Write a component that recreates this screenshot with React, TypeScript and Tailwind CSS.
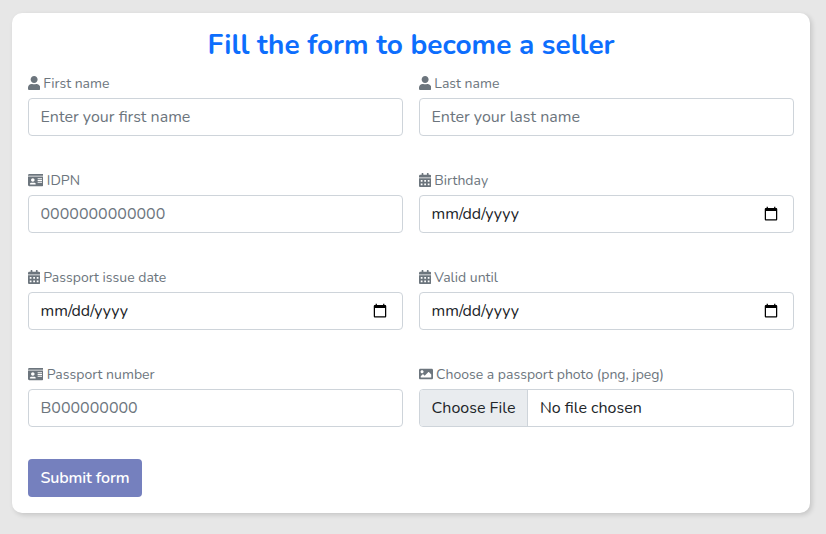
import React from "react";
import type { ReactNode } from "react";
import { FaUser, FaIdCard, FaCalendarAlt, FaImage } from "react-icons/fa";

const control =
  "block h-[38px] w-full rounded-[4px] border border-[#ced4da] bg-white pl-[11.5px] pr-3 py-1.5 text-base leading-6 text-[#212529] outline-none placeholder:text-[#6c757d]";

const dateControl =
  control +
  " [&::-webkit-datetime-edit-fields-wrapper]:p-0 [&::-webkit-datetime-edit-text]:p-0 [&::-webkit-datetime-edit-month-field]:p-0 [&::-webkit-datetime-edit-day-field]:p-0 [&::-webkit-datetime-edit-year-field]:p-0";

function Field({ icon, label, children }: { icon: ReactNode; label: string; children: ReactNode }) {
  return (
    <label className="block">
      <span className="mb-1 -ml-[0.5px] flex h-[21px] items-center gap-[3.6px] text-[14px] leading-[21px] text-[#6c757d]">
        <span className="pb-[1.5px]">{icon}</span>
        <span>{label}</span>
      </span>
      {children}
    </label>
  );
}

const user = <FaUser className="h-[14px] w-[12.25px]" />;
const idCard = <FaIdCard className="h-[14px] w-[15.75px]" />;
const calendar = <FaCalendarAlt className="h-[14px] w-[12.25px]" />;
const image = <FaImage className="h-[14px] w-[14px]" />;

export default function App() {
  return (
    <div className="h-screen bg-[#e7e7e7] pt-[13px] pr-4 pl-3 font-['Nunito','Lato',sans-serif]">
      <form
        className="h-[500px] rounded-[10px] bg-white p-4 shadow-[2px_2px_5px_rgba(0,0,0,0.15)]"
        onSubmit={(e) => e.preventDefault()}
      >
        <h3 className="h-[44px] text-center text-[28px] leading-[33px] font-bold text-[#0d6efd]">
          Fill the form to become a seller
        </h3>
        <div className="grid grid-cols-2 gap-x-4 gap-y-[34px]">
          <Field icon={user} label="First name">
            <input className={control} placeholder="Enter your first name" />
          </Field>
          <Field icon={user} label="Last name">
            <input className={control} placeholder="Enter your last name" />
          </Field>
          <Field icon={idCard} label="IDPN">
            <input className={control} placeholder="0000000000000" />
          </Field>
          <Field icon={calendar} label="Birthday">
            <input type="date" className={dateControl} />
          </Field>
          <Field icon={calendar} label="Passport issue date">
            <input type="date" className={dateControl} />
          </Field>
          <Field icon={calendar} label="Valid until">
            <input type="date" className={dateControl} />
          </Field>
          <Field icon={idCard} label="Passport number">
            <input className={control} placeholder="B000000000" />
          </Field>
          <Field icon={image} label="Choose a passport photo (png, jpeg)">
            <input
              type="file"
              className="block h-[38px] w-full overflow-hidden rounded-[4px] border border-[#ced4da] bg-white text-base leading-6 text-[#212529] file:mr-3 file:h-9 file:w-[108px] file:border-0 file:border-r file:border-solid file:border-[#ced4da] file:bg-[#e9ecef] file:px-0 file:text-[#212529]"
            />
          </Field>
        </div>
        <button
          type="submit"
          className="mt-8 block h-[38px] w-[114px] rounded-[4px] bg-[#7580be] text-center text-base leading-6 font-semibold tracking-[-0.12px] whitespace-nowrap text-white"
        >
          Submit form
        </button>
      </form>
    </div>
  );
}
